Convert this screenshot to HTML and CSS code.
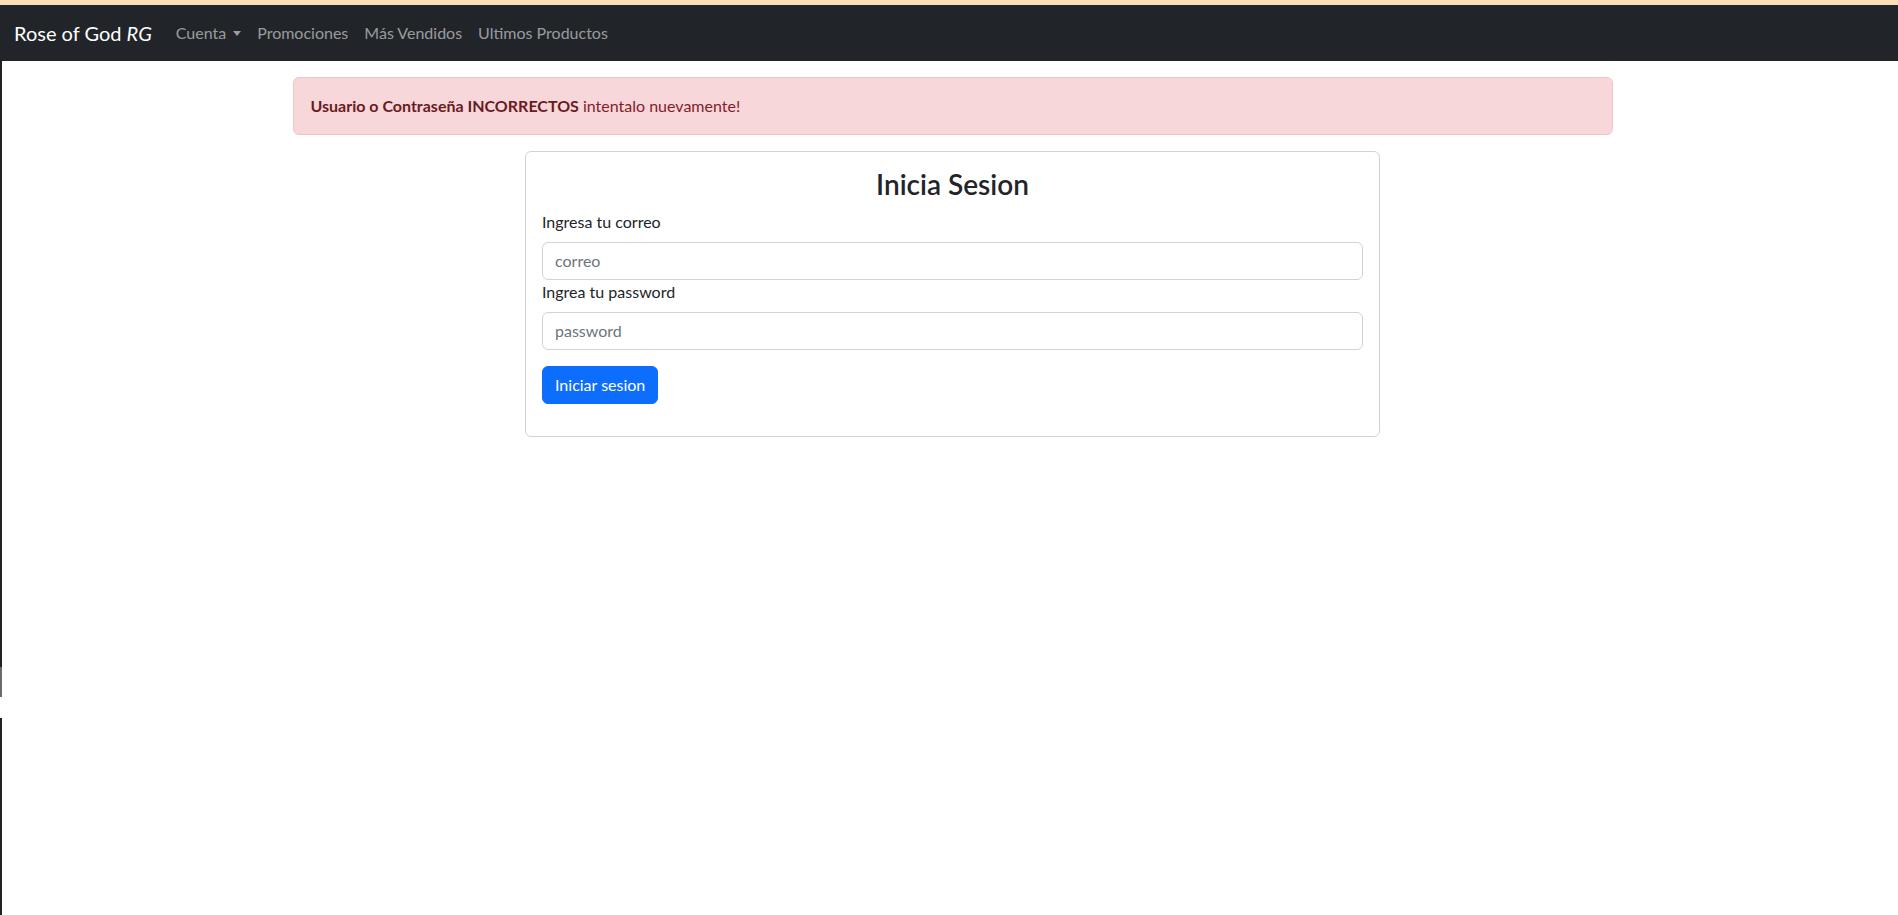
FILE: index.html
```html
<!DOCTYPE html>
<html lang="es">
<head>
<meta charset="utf-8">
<title>Rose of God RG</title>
<link rel="stylesheet" href="styles.css">
</head>
<body>
<div class="topstripe"></div>
<nav class="navbar">
  <a class="brand" href="#">Rose of God <i>RG</i></a>
  <ul class="nav">
    <li><a class="nav-link dropdown" href="#">Cuenta<span class="caret"></span></a></li>
    <li><a class="nav-link" href="#">Promociones</a></li>
    <li><a class="nav-link" href="#">Más Vendidos</a></li>
    <li><a class="nav-link" href="#">Ultimos Productos</a></li>
  </ul>
</nav>
<div class="page">
  <main class="container">
    <div class="alert"><strong>Usuario o Contraseña INCORRECTOS</strong> intentalo nuevamente!</div>
    <div class="card">
      <form class="card-body">
        <h3 class="title">Inicia Sesion</h3>
        <label class="label" for="correo">Ingresa tu correo</label>
        <input class="input" id="correo" type="text" placeholder="correo">
        <label class="label" for="pass">Ingrea tu password</label>
        <input class="input" id="pass" type="password" placeholder="password">
        <div class="actions"><button class="btn" type="button">Iniciar sesion</button></div>
      </form>
    </div>
  </main>
</div>
</body>
</html>
```
FILE: styles.css
```css
* { box-sizing: border-box; }
html, body { margin: 0; height: 100%; }
body {
  font-family: "Segoe UI", Lato, "Noto Sans", "Liberation Sans", sans-serif;
  font-size: 16px;
  line-height: 1.5;
  color: #212529;
  background: #fff;
  display: flex;
  flex-direction: column;
}
.topstripe { height: 5px; background: #fedcb8; }
.navbar {
  background: #212529;
  display: flex;
  align-items: center;
  padding: 8px 12px 8px 14px;
  height: 56px;
}
.brand {
  color: #fff;
  text-decoration: none;
  font-size: 20px;
  line-height: 30px;
  margin-right: 16px;
  padding: 5px 0;
}
.nav { list-style: none; margin: 0; padding: 0; display: flex; }
.nav-link {
  display: block;
  color: rgba(255,255,255,.55);
  text-decoration: none;
  padding: 8px;
  line-height: 24px;
}
.caret {
  display: inline-block;
  margin-left: 7px;
  vertical-align: 3px;
  border-top: 5px solid;
  border-left: 4px solid transparent;
  border-right: 4px solid transparent;
}
.page {
  flex: 1;
  padding-left: 7px;
  background:
    linear-gradient(#202124, #202124) 0 0 / 2px 606px no-repeat,
    linear-gradient(#6b6b6b, #6b6b6b) 0 606px / 2px 30px no-repeat,
    linear-gradient(#202124, #202124) 0 657px / 2px 100% no-repeat,
    #fff;
}
.container {
  width: 1320px;
  margin: 0 auto;
  padding-top: 16px;
}
.alert {
  background: #f8d7da;
  border: 1px solid #f5c2c7;
  border-radius: 6px;
  color: #842029;
  padding: 16px 17px;
  margin-bottom: 16px;
}
.alert strong { color: #6a1a21; font-weight: 700; }
.card {
  width: 855px;
  margin: 0 auto;
  border: 1px solid rgba(0,0,0,.175);
  border-radius: 6px;
}
.card-body { padding: 16px; display: flex; flex-direction: column; margin: 0; }
.title {
  font-size: 28px;
  font-weight: 600;
  line-height: 1.2;
  text-align: center;
  margin: 0 0 8px;
}
.label { margin-bottom: 8px; }
.input {
  font: inherit;
  height: 38px;
  padding: 6px 12px;
  border: 1px solid #ced4da;
  border-radius: 6px;
  color: #212529;
}
.input::placeholder { color: #6c757d; }
.actions { margin-top: 16px; margin-bottom: 16px; }
.btn {
  font: inherit;
  background: #0d6efd;
  color: #fff;
  border: 1px solid #0d6efd;
  border-radius: 6px;
  padding: 6px 12px;
  height: 38px;
}
```
